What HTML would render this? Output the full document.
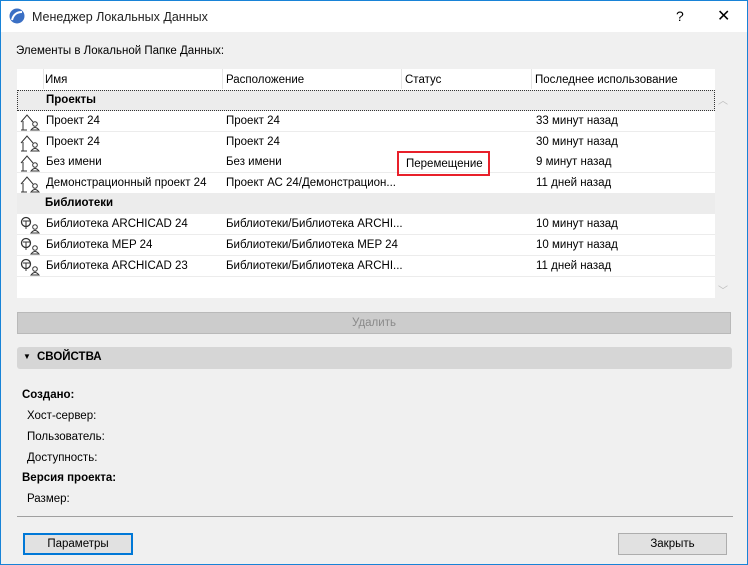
<!DOCTYPE html>
<html><head><meta charset="utf-8"><style>
*{margin:0;padding:0;box-sizing:border-box}
body{width:748px;height:565px;overflow:hidden;font-family:"Segoe UI","Liberation Sans","DejaVu Sans",sans-serif;font-size:11.5px;color:#000;background:#fff}
#win{position:absolute;left:0;top:0;width:748px;height:565px;border:1px solid #1883d7;background:#f0f0f0}
#title{position:absolute;left:0;top:0;width:746px;height:31px;background:#fff}
.a{position:absolute;white-space:nowrap}
.row{position:absolute;left:16px;width:698px;height:21px;border-bottom:1px solid #ececec;background:#fff}
.grp{background:#ececec;font-weight:bold}
.row span{position:absolute;top:4px;white-space:nowrap}
.ico{position:absolute;left:3px;top:2px}
b{font-weight:bold}
</style></head><body><div id="win">
<div id="title">
<svg class="a" style="left:8px;top:7px" width="16" height="16" viewBox="0 0 16 16"><circle cx="8" cy="8" r="7.5" fill="#3a6fc4"/><path d="M3 12 Q5 4 13 4" stroke="#fff" stroke-width="2" fill="none"/></svg>
<div class="a" style="left:31px;top:9px;font-size:12.5px;color:#222">Менеджер Локальных Данных</div>
<div class="a" style="left:675px;top:7px;font-size:14px">?</div>
<div class="a" style="left:716px;top:5px;font-size:16px;font-weight:300">✕</div>
</div>
<div class="a" style="left:15px;top:44px">Элементы в Локальной Папке Данных:</div>
<div class="a" style="left:16px;top:68px;width:698px;height:229px;background:#fff"></div>
<div class="a" style="left:16px;top:68px;width:698px;height:21px;background:#fff">
<span class="a" style="left:28px;top:5px">Имя</span>
<span class="a" style="left:209px;top:5px">Расположение</span>
<span class="a" style="left:388px;top:5px">Статус</span>
<span class="a" style="left:518px;top:5px">Последнее использование</span>
<div class="a" style="left:26px;top:0;width:1px;height:20px;background:#e5e5e5"></div>
<div class="a" style="left:205px;top:0;width:1px;height:20px;background:#e5e5e5"></div>
<div class="a" style="left:384px;top:0;width:1px;height:20px;background:#e5e5e5"></div>
<div class="a" style="left:514px;top:0;width:1px;height:20px;background:#e5e5e5"></div>
</div>
<div class="row grp" style="top:89px;border:1px dotted #333"><span style="left:28px;top:3px">Проекты</span></div>
<div class="row" style="top:110px"><svg class="ico" width="20" height="18" viewBox="0 0 20 18"><path d="M1 9 L7 2 L13 9 M3 8 V17 M1 17 H7" stroke="#333" fill="none"/><circle cx="15" cy="11" r="2.3" stroke="#333" fill="none"/><path d="M11 17 Q15 12 19 17 Z" stroke="#333" fill="none"/></svg><span style="left:29px">Проект 24</span><span style="left:209px">Проект 24</span><span style="left:519px">33 минут назад</span></div>
<div class="row" style="top:131px"><svg class="ico" width="20" height="18" viewBox="0 0 20 18"><path d="M1 9 L7 2 L13 9 M3 8 V17 M1 17 H7" stroke="#333" fill="none"/><circle cx="15" cy="11" r="2.3" stroke="#333" fill="none"/><path d="M11 17 Q15 12 19 17 Z" stroke="#333" fill="none"/></svg><span style="left:29px">Проект 24</span><span style="left:209px">Проект 24</span><span style="left:519px">30 минут назад</span></div>
<div class="row" style="top:151px"><svg class="ico" width="20" height="18" viewBox="0 0 20 18"><path d="M1 9 L7 2 L13 9 M3 8 V17 M1 17 H7" stroke="#333" fill="none"/><circle cx="15" cy="11" r="2.3" stroke="#333" fill="none"/><path d="M11 17 Q15 12 19 17 Z" stroke="#333" fill="none"/></svg><span style="left:29px">Без имени</span><span style="left:209px">Без имени</span><span style="left:519px">9 минут назад</span></div>
<div class="row" style="top:172px"><svg class="ico" width="20" height="18" viewBox="0 0 20 18"><path d="M1 9 L7 2 L13 9 M3 8 V17 M1 17 H7" stroke="#333" fill="none"/><circle cx="15" cy="11" r="2.3" stroke="#333" fill="none"/><path d="M11 17 Q15 12 19 17 Z" stroke="#333" fill="none"/></svg><span style="left:29px">Демонстрационный проект 24</span><span style="left:209px">Проект АС 24/Демонстрацион...</span><span style="left:519px">11 дней назад</span></div>
<div class="row grp" style="top:192px"><span style="left:28px">Библиотеки</span></div>
<div class="row" style="top:213px"><svg class="ico" width="20" height="18" viewBox="0 0 20 18"><circle cx="6" cy="6" r="4.5" stroke="#333" fill="none" stroke-width="1.3"/><path d="M3 5 H10 M6 5 V13" stroke="#333"/><circle cx="15" cy="11" r="2.3" stroke="#333" fill="none"/><path d="M11 17 Q15 12 19 17 Z" stroke="#333" fill="none"/></svg><span style="left:29px">Библиотека ARCHICAD 24</span><span style="left:209px">Библиотеки/Библиотека ARCHI...</span><span style="left:519px">10 минут назад</span></div>
<div class="row" style="top:234px"><svg class="ico" width="20" height="18" viewBox="0 0 20 18"><circle cx="6" cy="6" r="4.5" stroke="#333" fill="none" stroke-width="1.3"/><path d="M3 5 H10 M6 5 V13" stroke="#333"/><circle cx="15" cy="11" r="2.3" stroke="#333" fill="none"/><path d="M11 17 Q15 12 19 17 Z" stroke="#333" fill="none"/></svg><span style="left:29px">Библиотека MEP 24</span><span style="left:209px">Библиотеки/Библиотека MEP 24</span><span style="left:519px">10 минут назад</span></div>
<div class="row" style="top:255px"><svg class="ico" width="20" height="18" viewBox="0 0 20 18"><circle cx="6" cy="6" r="4.5" stroke="#333" fill="none" stroke-width="1.3"/><path d="M3 5 H10 M6 5 V13" stroke="#333"/><circle cx="15" cy="11" r="2.3" stroke="#333" fill="none"/><path d="M11 17 Q15 12 19 17 Z" stroke="#333" fill="none"/></svg><span style="left:29px">Библиотека ARCHICAD 23</span><span style="left:209px">Библиотеки/Библиотека ARCHI...</span><span style="left:519px">11 дней назад</span></div>
<div class="a" style="left:396px;top:150px;width:93px;height:25px;border:2px solid #e8202a;padding:5px 0 0 7px">Перемещение</div>
<div class="a" style="left:717px;top:91px;color:#bbb;font-size:10px">︿</div>
<div class="a" style="left:717px;top:281px;color:#bbb;font-size:10px">﹀</div>
<div class="a" style="left:16px;top:311px;width:714px;height:22px;background:#cccccc;border:1px solid #b9b9b9;text-align:center;padding-top:4px;color:#8a8a8a">Удалить</div>
<div class="a" style="left:16px;top:346px;width:715px;height:22px;background:#d6d6d6;border-radius:3px"><span class="a" style="left:6px;top:5px;font-size:8px">▼</span><b class="a" style="left:20px;top:4px">СВОЙСТВА</b></div>
<b class="a" style="left:21px;top:388px">Создано:</b>
<div class="a" style="left:26px;top:409px">Хост-сервер:</div>
<div class="a" style="left:26px;top:430px">Пользователь:</div>
<div class="a" style="left:26px;top:451px">Доступность:</div>
<b class="a" style="left:21px;top:471px">Версия проекта:</b>
<div class="a" style="left:26px;top:492px">Размер:</div>
<div class="a" style="left:16px;top:515px;width:716px;height:1px;background:#a0a0a0"></div>
<div class="a" style="left:22px;top:532px;width:110px;height:22px;background:#e1e1e1;border:2px solid #0078d7;text-align:center;padding-top:3px">Параметры</div>
<div class="a" style="left:617px;top:532px;width:109px;height:22px;background:#e1e1e1;border:1px solid #adadad;text-align:center;padding-top:4px">Закрыть</div>
</div></body></html>
